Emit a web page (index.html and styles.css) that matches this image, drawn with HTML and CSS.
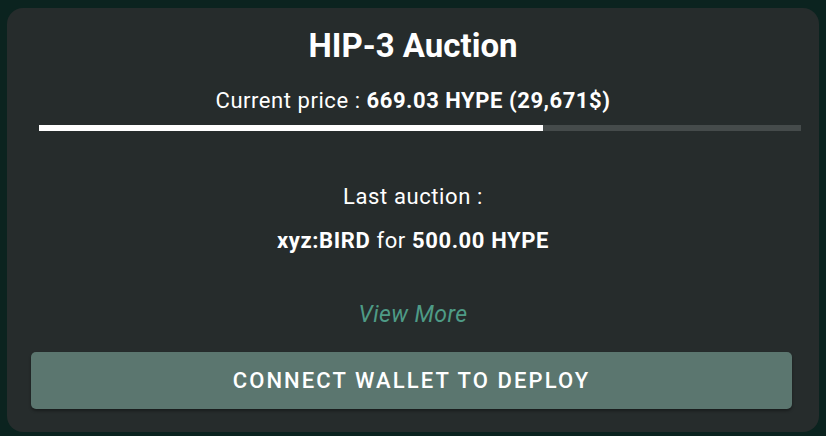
FILE: index.html
```html
<!DOCTYPE html>
<html>
<head>
<meta charset="utf-8">
<link rel="stylesheet" href="styles.css">
</head>
<body>
<div class="card">
  <h1 class="title">HIP-3 Auction</h1>
  <div class="price">Current price : <b>669.03 HYPE (29,671$)</b></div>
  <div class="bar"><div class="bar-fill" style="width:66.2%"></div></div>
  <div class="last">Last auction :</div>
  <div class="last-item"><b>xyz:BIRD</b> for <b>500.00 HYPE</b></div>
  <a class="more">View More</a>
  <button class="btn">CONNECT WALLET TO DEPLOY</button>
</div>
</body>
</html>
```
FILE: styles.css
```css
html, body { margin: 0; padding: 0; }
body {
  background: #0b231f;
  width: 826px;
  height: 436px;
  padding: 8px 7px 4px 7px;
  box-sizing: border-box;
  font-family: Roboto, "Liberation Sans", sans-serif;
  color: #fff;
}
.card {
  background: #262c2c;
  border-radius: 16px;
  height: 424px;
  box-sizing: border-box;
  padding: 21px 24px 23px 24px;
  display: flex;
  flex-direction: column;
  align-items: center;
}
.title {
  margin: 0;
  font-size: 33px;
  line-height: 34px;
  font-weight: 700;
  letter-spacing: 0;
}
.price {
  margin-top: 25px;
  font-size: 22px;
  line-height: 26px;
  letter-spacing: 0.55px;
}
.price b, .last-item b { font-weight: 700; }
.bar {
  margin-top: 11px;
  align-self: stretch;
  margin-left: 8px;
  margin-right: -6px;
  height: 6px;
  background: #454b4b;
}
.bar-fill { height: 100%; background: #fff; }
.last {
  margin-top: 53px;
  font-size: 22px;
  line-height: 26px;
  letter-spacing: 0.6px;
}
.last-item {
  margin-top: 18px;
  font-size: 22px;
  line-height: 26px;
  letter-spacing: 0.6px;
}
.more {
  margin-top: 47px;
  font-size: 23px;
  line-height: 28px;
  font-style: italic;
  letter-spacing: 0.4px;
  color: #4e9b86;
}
.btn {
  margin-top: 23px;
  align-self: stretch;
  margin-right: 3px;
  height: 57px;
  border: none;
  border-radius: 5px;
  background: #5b766f;
  color: #fff;
  font-family: Roboto, "Liberation Sans", sans-serif;
  font-size: 22px;
  font-weight: 500;
  letter-spacing: 2.1px;
  box-shadow: 0 2px 3px rgba(0,0,0,0.35);
}
```
